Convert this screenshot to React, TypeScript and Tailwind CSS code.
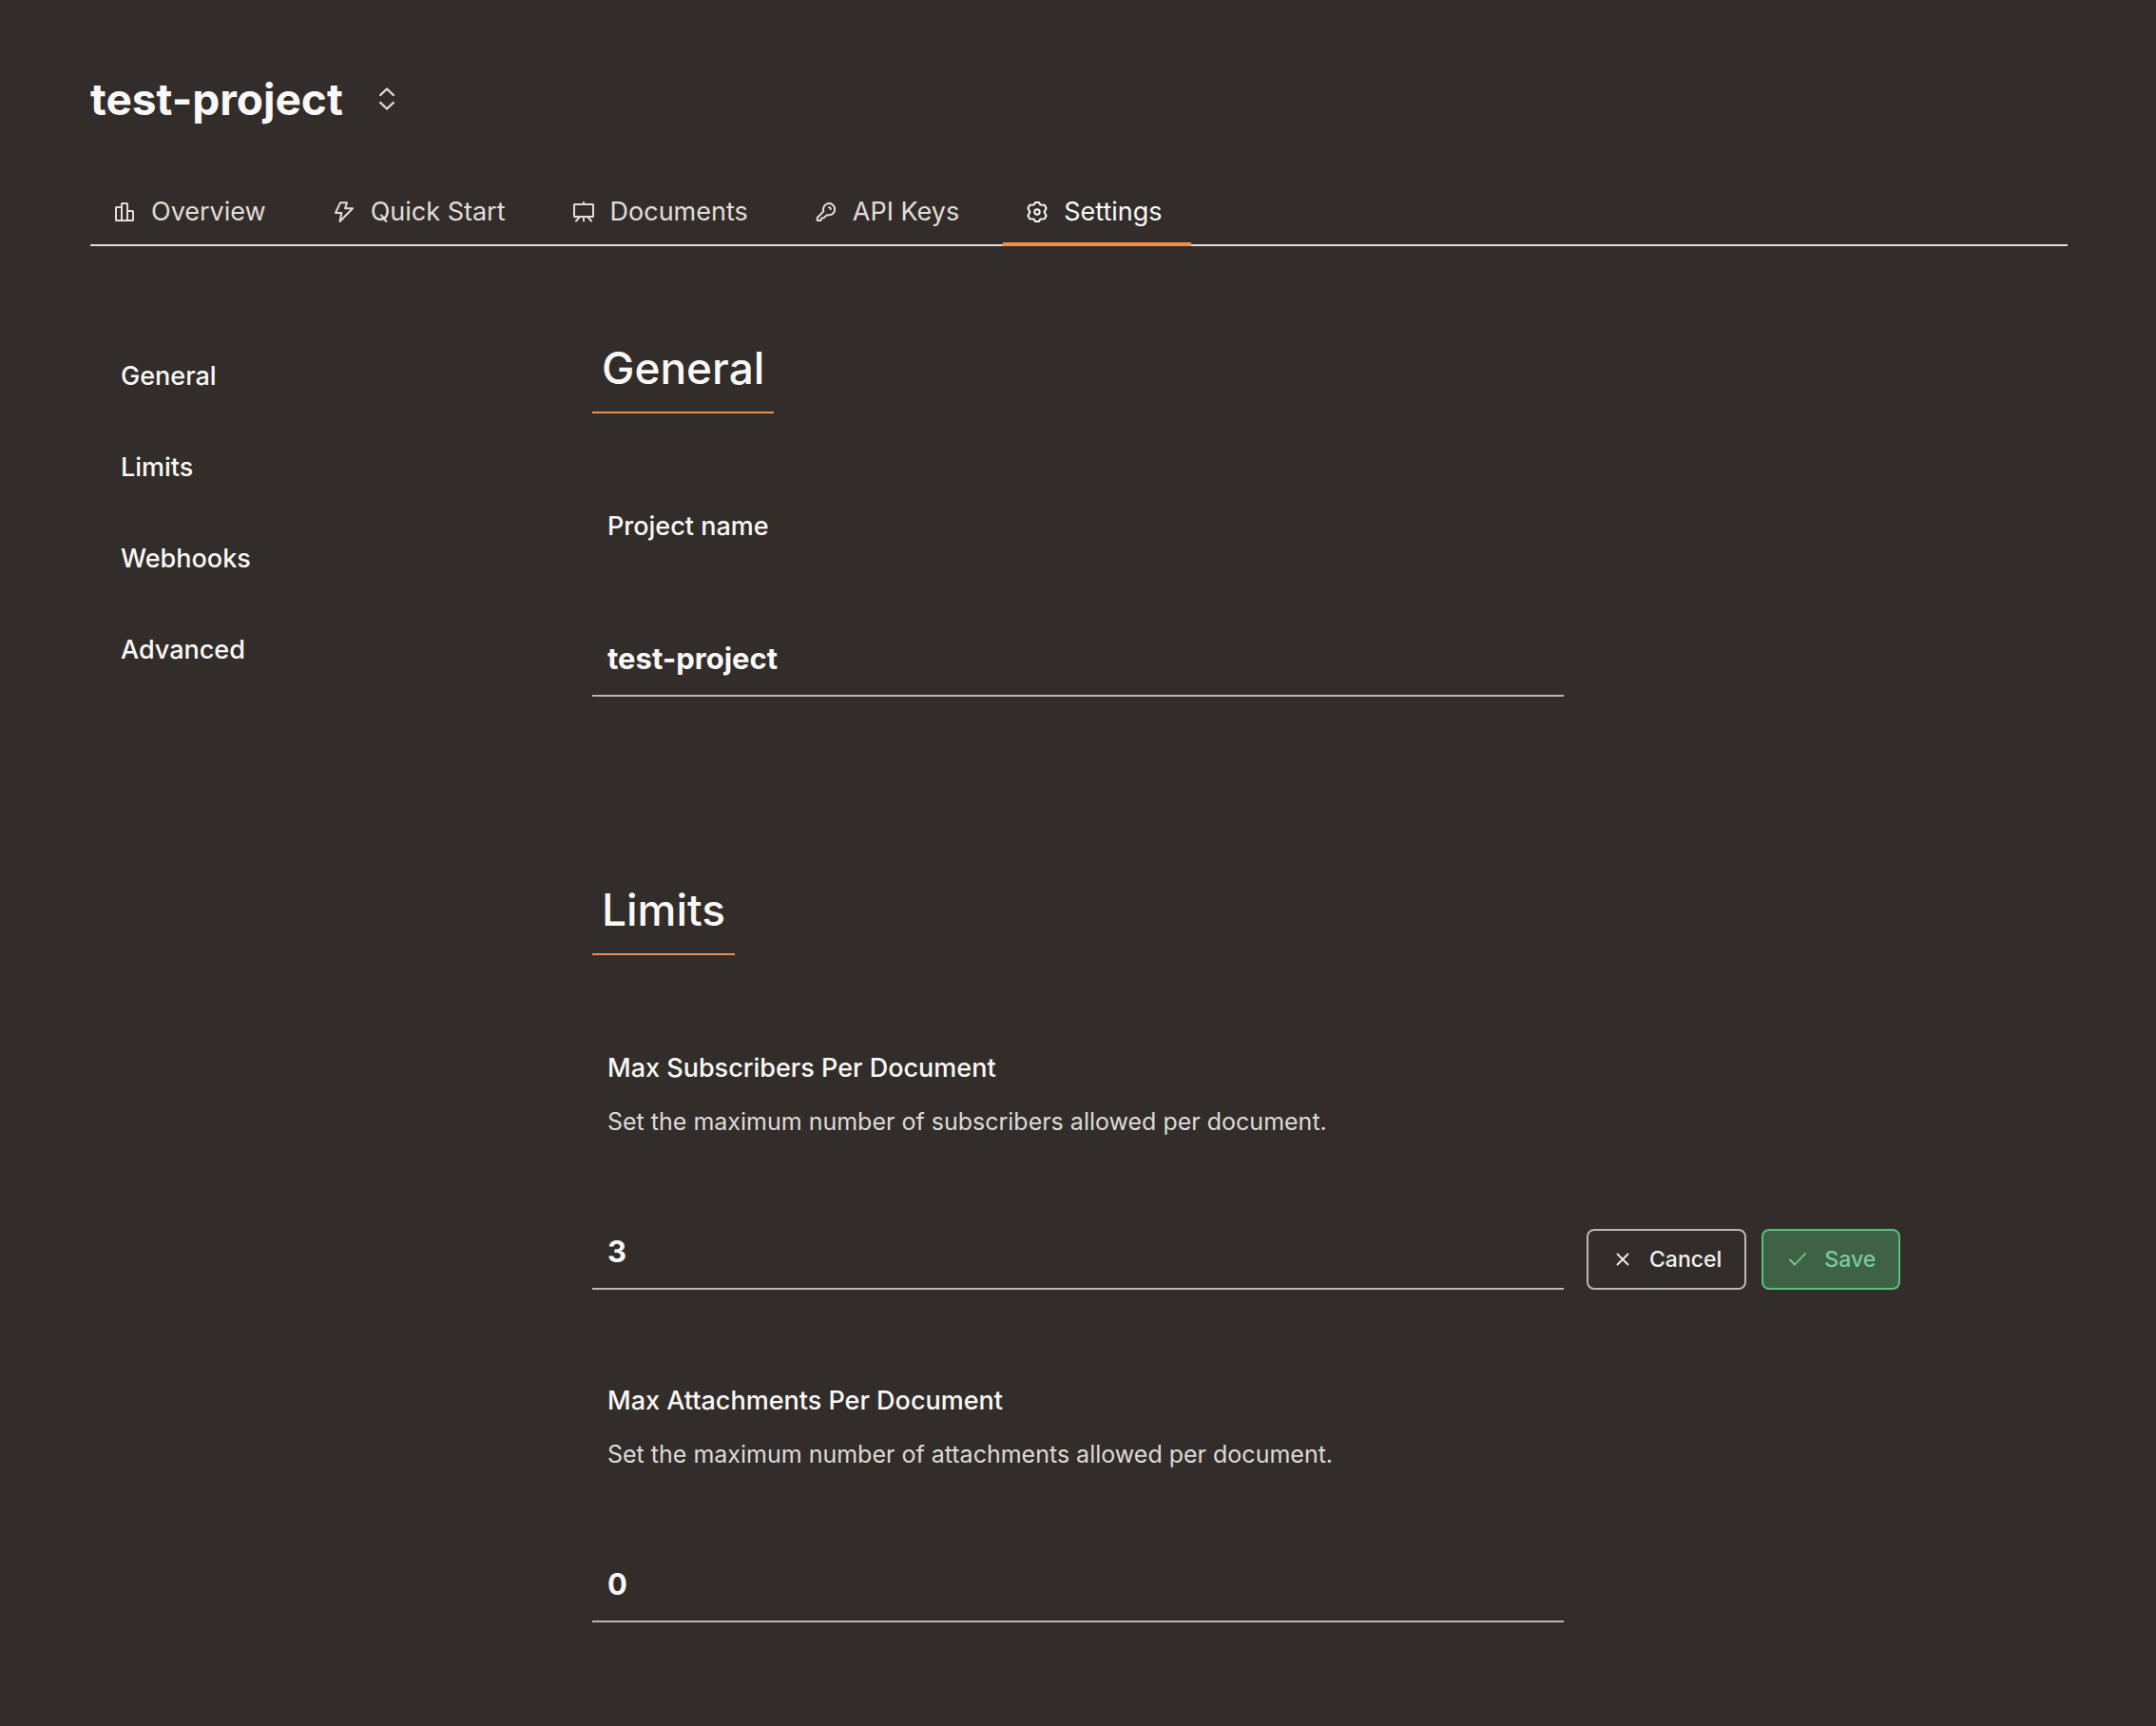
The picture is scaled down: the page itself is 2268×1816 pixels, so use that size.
import { useState, type ReactNode } from "react";

type IconProps = { strokeWidth?: number; children: ReactNode };

function Icon({ strokeWidth = 2, children }: IconProps) {
  return (
    <svg
      viewBox="0 0 24 24"
      fill="none"
      stroke="currentColor"
      strokeWidth={strokeWidth}
      strokeLinecap="round"
      strokeLinejoin="round"
      aria-hidden="true"
      className="size-6 shrink-0"
    >
      {children}
    </svg>
  );
}

const tabs = [
  {
    label: "Overview",
    icon: (
      <Icon>
        <path d="M9 21H3.600a.6.6 0 0 1-.6-.6V7.600a.6.6 0 0 1 .6-.6H9M9 21h6M9 21V3.600a.6.6 0 0 1 .6-.6h4.800a.6.6 0 0 1 .6.6V21M15 11h5.400a.6.6 0 0 1 .6.6v8.800a.6.6 0 0 1-.6.6H15" />
      </Icon>
    ),
  },
  {
    label: "Quick Start",
    icon: (
      <Icon>
        <path d="M8 2.200h7l-2 6h8L7.500 22l1.800-9H3z" />
      </Icon>
    ),
  },
  {
    label: "Documents",
    icon: (
      <Icon>
        <path d="M12 4h9.400a.6.6 0 0 1 .6.6v11.800a.6.6 0 0 1-.6.6H2.600a.6.6 0 0 1-.6-.6V4.600a.6.6 0 0 1 .6-.6H12zm0 0V2M8 17l-4 4.500M16 17l4 4.500M12 17v4.500" />
      </Icon>
    ),
  },
  {
    label: "API Keys",
    icon: (
      <Icon>
        <path d="M9.300 11.200a6.100 6.100 0 1 1 5.400 4.100l-2.200.3-3 2.600-2 .3-1.300 2.500H3.300a.6.6 0 0 1-.6-.6v-2.100z" />
        <path d="M15 7.200c1.100.1 1.800.8 1.900 1.900" />
      </Icon>
    ),
  },
  {
    label: "Settings",
    icon: (
      <Icon>
        <circle cx="12" cy="12" r="2.700" />
        <path d="M10.200 1.900h3.600l1.700 2.700 4.300.2L21.600 8l-2 4 2 4-1.800 3.200-4.300.2-1.700 2.700h-3.600l-1.700-2.700-4.300-.2L2.400 16l2-4-2-4 1.800-3.200 4.300-.2z" />
      </Icon>
    ),
  },
];

const sections = ["General", "Limits", "Webhooks", "Advanced"];

function SectionHeading({ children }: { children: string }) {
  return (
    <h2
      id={children.toLowerCase()}
      className="w-fit border-b-2 border-[#ef8e47] px-2.5 pb-3.5 text-[46px] leading-16 font-medium"
    >
      {children}
    </h2>
  );
}

type FieldProps = {
  id: string;
  label: string;
  description?: string;
  initial: string;
  actions?: ReactNode;
};

function Field({ id, label, description, initial, actions }: FieldProps) {
  const [value, setValue] = useState(initial);
  return (
    <div>
      <label htmlFor={id} className="block px-4 text-[27px] leading-10 font-medium">
        {label}
      </label>
      {description && (
        <p className="mt-[18px] px-4 text-[25px] leading-9 text-[#dedad7]">{description}</p>
      )}
      <div className="mt-[79px] flex items-end gap-6">
        <input
          id={id}
          type="text"
          value={value}
          onChange={(e) => setValue(e.target.value)}
          className="h-20 w-[1022px] min-w-0 border-b-2 border-[#bdb6b2] bg-transparent px-4 text-[31px] font-bold outline-none"
        />
        {actions}
      </div>
    </div>
  );
}

export default function App() {
  return (
    <div className="min-h-screen bg-[#322d2a] pt-20 pr-[93px] pb-[108px] pl-[95px] font-[Inter,sans-serif] text-[#faf8f7]">
      <header className="flex items-center gap-[34px]">
        <h1 className="text-[46px] leading-12 font-bold">test-project</h1>
        <button type="button" aria-label="Switch project" className="text-[#e2ddda]">
          <Icon strokeWidth={2.4}>
            <path d="m5.200 8 6.800-6.500L18.800 8M5.200 16l6.800 6.500 6.800-6.500" />
          </Icon>
        </button>
      </header>

      <nav className="mt-[60px] flex gap-4 border-b-2 border-[#e2ddda]">
        {tabs.map(({ label, icon }) => (
          <a
            key={label}
            href={`#${label}`}
            aria-current={label === "Settings" ? "page" : undefined}
            className={`-mb-0.5 flex items-center gap-4 border-b-4 pt-[15px] pr-[30px] pb-3 pl-6 text-[27px] leading-10 ${
              label === "Settings"
                ? "border-[#ef8e47] text-[#faf8f7]"
                : "border-transparent text-[#e2ddda]"
            }`}
          >
            {icon}
            {label}
          </a>
        ))}
      </nav>

      <div className="mt-24 grid grid-cols-[528px_1fr]">
        <aside className="flex flex-col items-start gap-14 pt-[21px] pl-8">
          {sections.map((name) => (
            <a
              key={name}
              href={`#${name.toLowerCase()}`}
              className="text-[27px] leading-10 font-medium"
            >
              {name}
            </a>
          ))}
        </aside>

        <main className="flex min-w-0 flex-col gap-48">
          <section className="flex flex-col gap-[99px]">
            <SectionHeading>General</SectionHeading>
            <Field id="project-name" label="Project name" initial="test-project" />
          </section>

          <section className="flex flex-col gap-[99px]">
            <SectionHeading>Limits</SectionHeading>
            <div className="flex flex-col gap-[97px]">
              <Field
                id="max-subscribers"
                label="Max Subscribers Per Document"
                description="Set the maximum number of subscribers allowed per document."
                initial="3"
                actions={
                  <div className="flex gap-4 text-[23px] font-medium">
                    <button
                      type="button"
                      className="flex h-16 items-center gap-4 rounded-lg border-2 border-[#bdb6b2] px-6 text-[#f3f0ee]"
                    >
                      <Icon strokeWidth={1.8}>
                        <path d="m6.500 6.500 11 11M17.500 6.500l-11 11" />
                      </Icon>
                      Cancel
                    </button>
                    <button
                      type="button"
                      className="flex h-16 items-center gap-4 rounded-lg border-2 border-[#5bbf7c] bg-[#3f6246] px-6 text-[#78cd98]"
                    >
                      <Icon strokeWidth={1.8}>
                        <path d="m4 12.500 5 5L20 6" />
                      </Icon>
                      Save
                    </button>
                  </div>
                }
              />
              <Field
                id="max-attachments"
                label="Max Attachments Per Document"
                description="Set the maximum number of attachments allowed per document."
                initial="0"
              />
            </div>
          </section>
        </main>
      </div>
    </div>
  );
}
